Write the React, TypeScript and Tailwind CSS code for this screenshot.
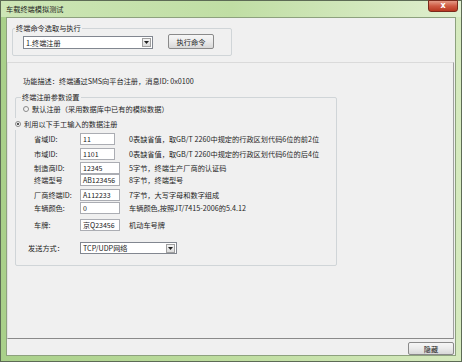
import React from "react";

const FONT = "font-['Noto_Sans_CJK_SC','Noto_Sans',sans-serif]";

const ROWS = [
  { label: "省域ID:", value: "11", w: "w-[35px]", mt: "mt-0", desc: "0表缺省值，取GB/T 2260中规定的行政区划代码6位的前2位" },
  { label: "市域ID:", value: "1101", w: "w-[35px]", mt: "mt-[3px]", desc: "0表缺省值，取GB/T 2260中规定的行政区划代码6位的后4位" },
  { label: "制造商ID:", value: "12345", w: "w-[40px]", mt: "mt-[2px]", desc: "5字节，终端生产厂商的认证码" },
  { label: "终端型号", value: "AB123456", w: "w-[40px]", mt: "mt-0", desc: "8字节，终端型号" },
  { label: "厂商终端ID:", value: "A112233", w: "w-[40px]", mt: "mt-[3px]", desc: "7字节，大写字母和数字组成" },
  { label: "车辆颜色:", value: "0", w: "w-[40px]", mt: "mt-[1px]", desc: "车辆颜色,按照JT/7415-2006的5.4.12" },
  { label: "车牌:", value: "京Q23456", w: "w-[40px]", mt: "mt-[5px]", desc: "机动车号牌" },
];

function DropArrow() {
  return (
    <div className="w-[9px] h-[9px] mr-[1px] border border-[#a0a0a0] bg-gradient-to-b from-[#f4f4f4] to-[#dcdcdc] flex items-center justify-center">
      <svg width="5" height="3" viewBox="0 0 5 3">
        <path d="M0 0h5L2.5 3z" fill="#222" />
      </svg>
    </div>
  );
}

function Combo({ text, className }: { text: string; className: string }) {
  return (
    <div className={`${className} border border-[#828790] bg-white flex items-center justify-between`}>
      <span className="pl-[2px] text-[7.2px] leading-[10px] text-[#1a1a1a]">{text}</span>
      <DropArrow />
    </div>
  );
}

function Button({ text, className }: { text: string; className: string }) {
  return (
    <div className={`${className} border border-[#8a8a8a] rounded-[2px] bg-gradient-to-b from-[#f6f6f6] via-[#ebebeb] to-[#d8d8d8] flex items-center justify-center text-[7.2px] leading-[10px] text-[#1a1a1a]`}>
      {text}
    </div>
  );
}

function Radio({ checked }: { checked?: boolean }) {
  return (
    <div className="w-[6px] h-[6px] rounded-full border border-[#8a8a8a] bg-gradient-to-br from-[#e6e6e6] to-white flex items-center justify-center">
      {checked && <div className="w-[2px] h-[2px] rounded-full bg-[#222]" />}
    </div>
  );
}

export default function App() {
  return (
    <div className={`${FONT} w-[462px] h-[362px] border border-[#5d6b55] bg-gradient-to-r from-[#a9d08a] via-[#bedd9f] to-[#d6eabf] flex flex-col`}>
      {/* Title bar */}
      <div className="relative h-[16px] flex items-center pl-[5px] bg-gradient-to-r from-[#cde6b6] via-[#c0dea4] to-[#e0efcf]">
        <span className="text-[7.2px] leading-[10px] text-[#1e1e1e]">车载终端模拟测试</span>
        <div className="absolute top-[-1px] right-[3px] w-[30px] h-[12px] rounded-b-[3px] border border-[#7a2a1c] bg-gradient-to-b from-[#e49a86] via-[#cf5a43] to-[#b8371f] flex items-center justify-center">
          <span className="text-white text-[8px] leading-[8px] font-bold font-['DejaVu_Sans',sans-serif]">x</span>
        </div>
      </div>

      {/* Client area */}
      <div className="mx-[5px] h-[339px] border border-[#8da17e] bg-[#f0f0f0] flex flex-col">
        {/* Command group */}
        <div className="relative ml-[5px] mt-[10px] w-[220px] h-[28px] border border-[#d0d5d8] rounded-[2px] flex items-start pl-[10px] pt-[5px]">
          <span className="absolute top-[-6px] left-[2px] px-[1px] bg-[#f0f0f0] text-[7.2px] leading-[10px] text-[#1e1e1e]">终端命令选取与执行</span>
          <Combo text="1.终端注册" className="mt-[2px] w-[130px] h-[13px]" />
          <Button text="执行命令" className="ml-[15px] w-[46px] h-[15px]" />
        </div>

        {/* Panel */}
        <div className="mt-[6px] w-[447px] h-[277px] border-t border-l border-t-[#dadada] border-l-[#e0e0e0] border-r border-b border-r-[#a0a0a0] border-b-[#8a8a8a] flex flex-col">
          <div className="ml-[15px] mt-[12px] text-[7.2px] leading-[12px] text-[#1e1e1e]">
            功能描述：终端通过SMS向平台注册，消息ID: 0x0100
          </div>

          {/* Register params group */}
          <div className="relative ml-[7px] mt-[10px] w-[322px] h-[169px] border border-[#d0d5d8] rounded-[2px] flex flex-col">
            <span className="absolute top-[-6px] left-[5px] px-[1px] bg-[#f0f0f0] text-[7.2px] leading-[10px] text-[#1e1e1e]">终端注册参数设置</span>

            <div className="mt-[5px] ml-[7px] h-[12px] flex items-center">
              <Radio />
              <span className="ml-[3px] text-[7.2px] leading-[12px] text-[#1e1e1e]">默认注册（采用数据库中已有的模拟数据）</span>
            </div>
            <div className="mt-[3px] ml-[-1px] h-[12px] flex items-center bg-[#f0f0f0] w-fit">
              <Radio checked />
              <span className="ml-[3px] text-[7.2px] leading-[12px] text-[#1e1e1e]">利用以下手工输入的数据注册</span>
            </div>

            <div className="mt-[3px] flex flex-col">
              {ROWS.map((r) => (
                <div key={r.label} className={`${r.mt} h-[12px] flex items-center`}>
                  <span className="ml-[18px] w-[46px] text-[7.2px] leading-[12px] text-[#1e1e1e] whitespace-nowrap">{r.label}</span>
                  <div className="w-[49px]">
                    <div className={`${r.w} h-[12px] border border-[#abadb3] bg-white pl-[2px] flex items-center text-[7px] leading-[10px] text-[#1a1a1a] font-['Noto_Sans_CJK_SC','Liberation_Sans',sans-serif]`}>
                      {r.value}
                    </div>
                  </div>
                  <span className="text-[7.2px] leading-[12px] text-[#1e1e1e] whitespace-nowrap">{r.desc}</span>
                </div>
              ))}

              <div className="mt-[11px] h-[12px] flex items-center">
                <span className="ml-[12px] w-[52px] text-[7.2px] leading-[12px] text-[#1e1e1e]">发送方式：</span>
                <Combo text="TCP/UDP网络" className="w-[97px] h-[12px]" />
              </div>
            </div>
          </div>
        </div>

        <div className="mt-[3px] mr-[1px] self-end">
          <Button text="隐藏" className="w-[46px] h-[13px]" />
        </div>
      </div>
    </div>
  );
}
